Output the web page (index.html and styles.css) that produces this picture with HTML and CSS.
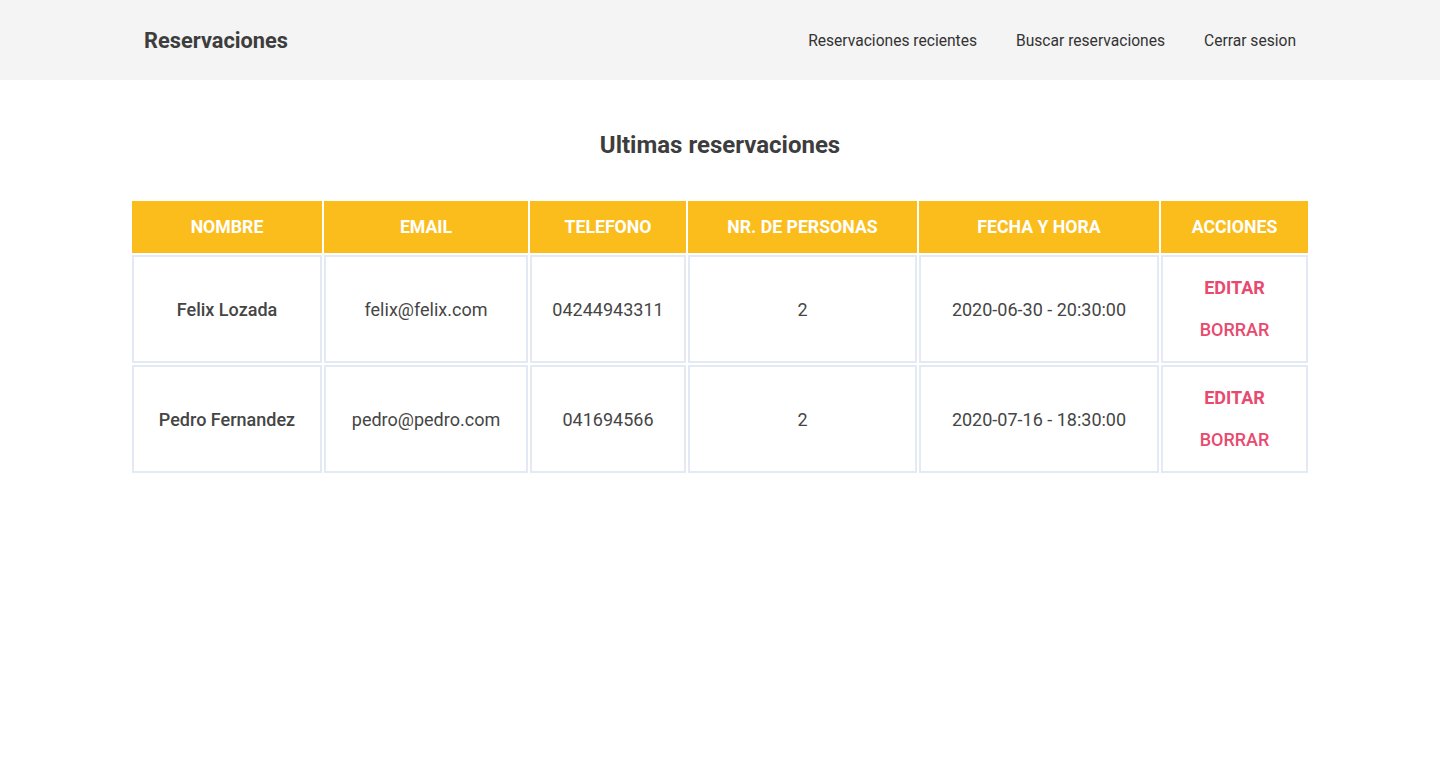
FILE: index.html
```html
<!DOCTYPE html>
<html lang="es">
<head>
<meta charset="utf-8">
<title>Reservaciones</title>
<link rel="stylesheet" href="styles.css">
</head>
<body>
<header class="topbar">
  <div class="container topbar-inner">
    <a class="brand" href="#">Reservaciones</a>
    <nav class="nav">
      <a href="#">Reservaciones recientes</a>
      <a href="#">Buscar reservaciones</a>
      <a href="#">Cerrar sesion</a>
    </nav>
  </div>
</header>
<main class="main">
  <h1 class="title">Ultimas reservaciones</h1>
  <table class="table">
    <colgroup>
      <col class="c1"><col class="c2"><col class="c3"><col class="c4"><col class="c5"><col class="c6">
    </colgroup>
    <thead>
      <tr>
        <th>Nombre</th>
        <th>Email</th>
        <th>Telefono</th>
        <th>Nr. de personas</th>
        <th>Fecha y hora</th>
        <th>Acciones</th>
      </tr>
    </thead>
    <tbody>
      <tr>
        <td class="name">Felix Lozada</td>
        <td>felix@felix.com</td>
        <td>04244943311</td>
        <td>2</td>
        <td>2020-06-30 - 20:30:00</td>
        <td class="actions"><a href="#" class="act bold">Editar</a><a href="#" class="act">Borrar</a></td>
      </tr>
      <tr>
        <td class="name">Pedro Fernandez</td>
        <td>pedro@pedro.com</td>
        <td>041694566</td>
        <td>2</td>
        <td>2020-07-16 - 18:30:00</td>
        <td class="actions"><a href="#" class="act bold">Editar</a><a href="#" class="act">Borrar</a></td>
      </tr>
    </tbody>
  </table>
</main>
</body>
</html>
```
FILE: styles.css
```css
* { box-sizing: border-box; }
html, body { margin: 0; padding: 0; background: #fff; }
body { font-family: Roboto, "Liberation Sans", Arial, sans-serif; color: #444; }
a { text-decoration: none; color: inherit; }

.topbar { background: #f4f4f4; height: 80px; }
.container { width: 1152px; margin: 0 auto; }
.topbar-inner { height: 80px; display: flex; align-items: center; justify-content: space-between; }
.brand { font-size: 21.8px; font-weight: 700; color: #3d3d3d; }
.nav { display: flex; gap: 39px; margin-top: 2px; }
.nav a { font-size: 15.6px; color: #333; }

.main { padding-top: 49px; }
.title { margin: 0 0 38px; text-align: center; font-size: 24px; font-weight: 700; color: #3d3d3d; line-height: 32px; }

.table { margin: 0 auto; border-collapse: separate; border-spacing: 2px; table-layout: fixed; width: 1180px; }
.c1 { width: 190px; } .c2 { width: 204px; } .c3 { width: 156px; } .c4 { width: 229px; } .c5 { width: 240px; } .c6 { width: 147px; }
.table th { background: #fbbd1c; color: #fff; font-size: 17.7px; font-weight: 700; text-transform: uppercase; height: 52px; padding: 0; text-align: center; }
.table td { border: 2px solid #e3eaf3; height: 108px; padding: 0; text-align: center; font-size: 18px; font-weight: 400; color: #454545; }
.table td.name { font-weight: 500; }
.actions .act { display: block; color: #e84a6f; font-size: 18px; text-transform: uppercase; font-weight: 500; line-height: 42px; }
.actions .act.bold { font-weight: 700; }
```
